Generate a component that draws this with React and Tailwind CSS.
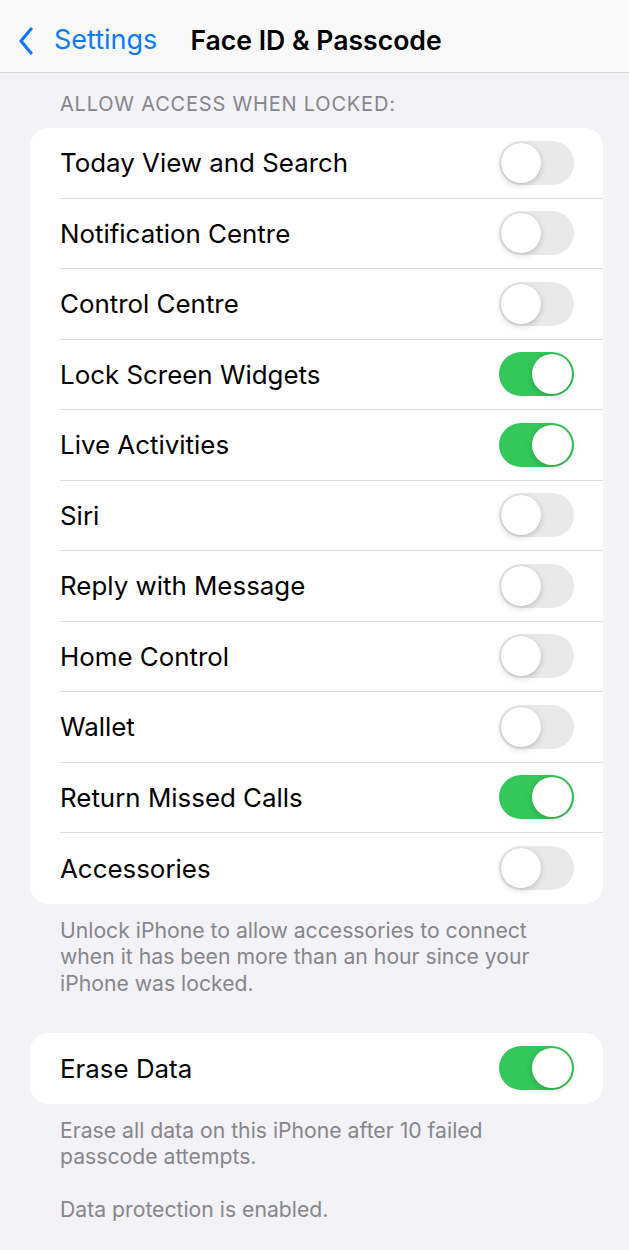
import React, { useState } from 'react';

const ROWS = [
  { label: 'Today View and Search', on: false },
  { label: 'Notification Centre', on: false },
  { label: 'Control Centre', on: false },
  { label: 'Lock Screen Widgets', on: true },
  { label: 'Live Activities', on: true },
  { label: 'Siri', on: false },
  { label: 'Reply with Message', on: false },
  { label: 'Home Control', on: false },
  { label: 'Wallet', on: false },
  { label: 'Return Missed Calls', on: true },
  { label: 'Accessories', on: false },
];

const Toggle = ({ on, onClick }) => (
  <button
    onClick={onClick}
    className={`relative h-[44px] w-[75px] shrink-0 rounded-full transition-colors ${on ? 'bg-[#34c759]' : 'bg-[#e9e9ea]'}`}
  >
    <span
      className={`absolute top-[2px] h-[40px] w-[40px] rounded-full bg-white shadow-[0_2px_6px_rgba(0,0,0,0.18),0_0_1px_rgba(0,0,0,0.15)] transition-all ${on ? 'left-[33px]' : 'left-[2px]'}`}
    />
  </button>
);

const Row = ({ label, on, onToggle, last }) => (
  <div className="flex h-[70.5px] items-center pl-[30px]">
    <div className={`flex h-full flex-1 items-center justify-between pr-[29px] ${last ? '' : 'border-b border-[#dcdce0]'}`}>
      <span className="pt-[2px] text-[25.9px] text-black">{label}</span>
      <Toggle on={on} onClick={onToggle} />
    </div>
  </div>
);

export default function App() {
  const [rows, setRows] = useState(ROWS);
  const [erase, setErase] = useState(true);

  const flip = (i) => setRows(rs => rs.map((r, j) => (j === i ? { ...r, on: !r.on } : r)));

  return (
    <div className="min-h-[1250px] bg-[#f2f2f7] font-['Inter',sans-serif]">
      {/* nav bar */}
      <header className="flex h-[73px] items-center border-b border-[#d9d9dd] bg-[#f9f9f9] pt-[9px]">
        <div className="flex items-center pl-[18px] text-[#0a7aff]">
          <svg width="16" height="28" viewBox="0 0 16 28" fill="none">
            <path d="M13 2 L3 14 L13 26" stroke="currentColor" strokeWidth="3.2" strokeLinecap="round" strokeLinejoin="round" />
          </svg>
          <span className="ml-[20px] text-[27px]">Settings</span>
        </div>
        <h1 className="ml-[33px] text-[26.6px] font-semibold text-black">Face ID &amp; Passcode</h1>
      </header>

      <div className="pl-[30px] pr-[26px]">
        <p className="pl-[30px] pt-[20px] pb-[13px] text-[20px] leading-[22px] tracking-[0.8px] text-[#86868b]">ALLOW ACCESS WHEN LOCKED:</p>

        <div className="overflow-hidden rounded-[18px] bg-white">
          {rows.map((r, i) => (
            <Row key={r.label} label={r.label} on={r.on} last={i === rows.length - 1} onToggle={() => flip(i)} />
          ))}
        </div>

        <p className="pl-[30px] pt-[13px] text-[21.2px] leading-[26.5px] text-[#86868b]">
          Unlock iPhone to allow accessories to connect<br />
          when it has been more than an hour since your<br />
          iPhone was locked.
        </p>

        <div className="mt-[37px] overflow-hidden rounded-[18px] bg-white">
          <Row label="Erase Data" on={erase} last onToggle={() => setErase(!erase)} />
        </div>

        <p className="pl-[30px] pt-[13px] text-[21.2px] leading-[26.5px] text-[#86868b]">
          Erase all data on this iPhone after 10 failed<br />
          passcode attempts.
        </p>
        <p className="pl-[30px] pt-[26px] text-[21.2px] leading-[26.5px] text-[#86868b]">Data protection is enabled.</p>
      </div>
    </div>
  );
}
